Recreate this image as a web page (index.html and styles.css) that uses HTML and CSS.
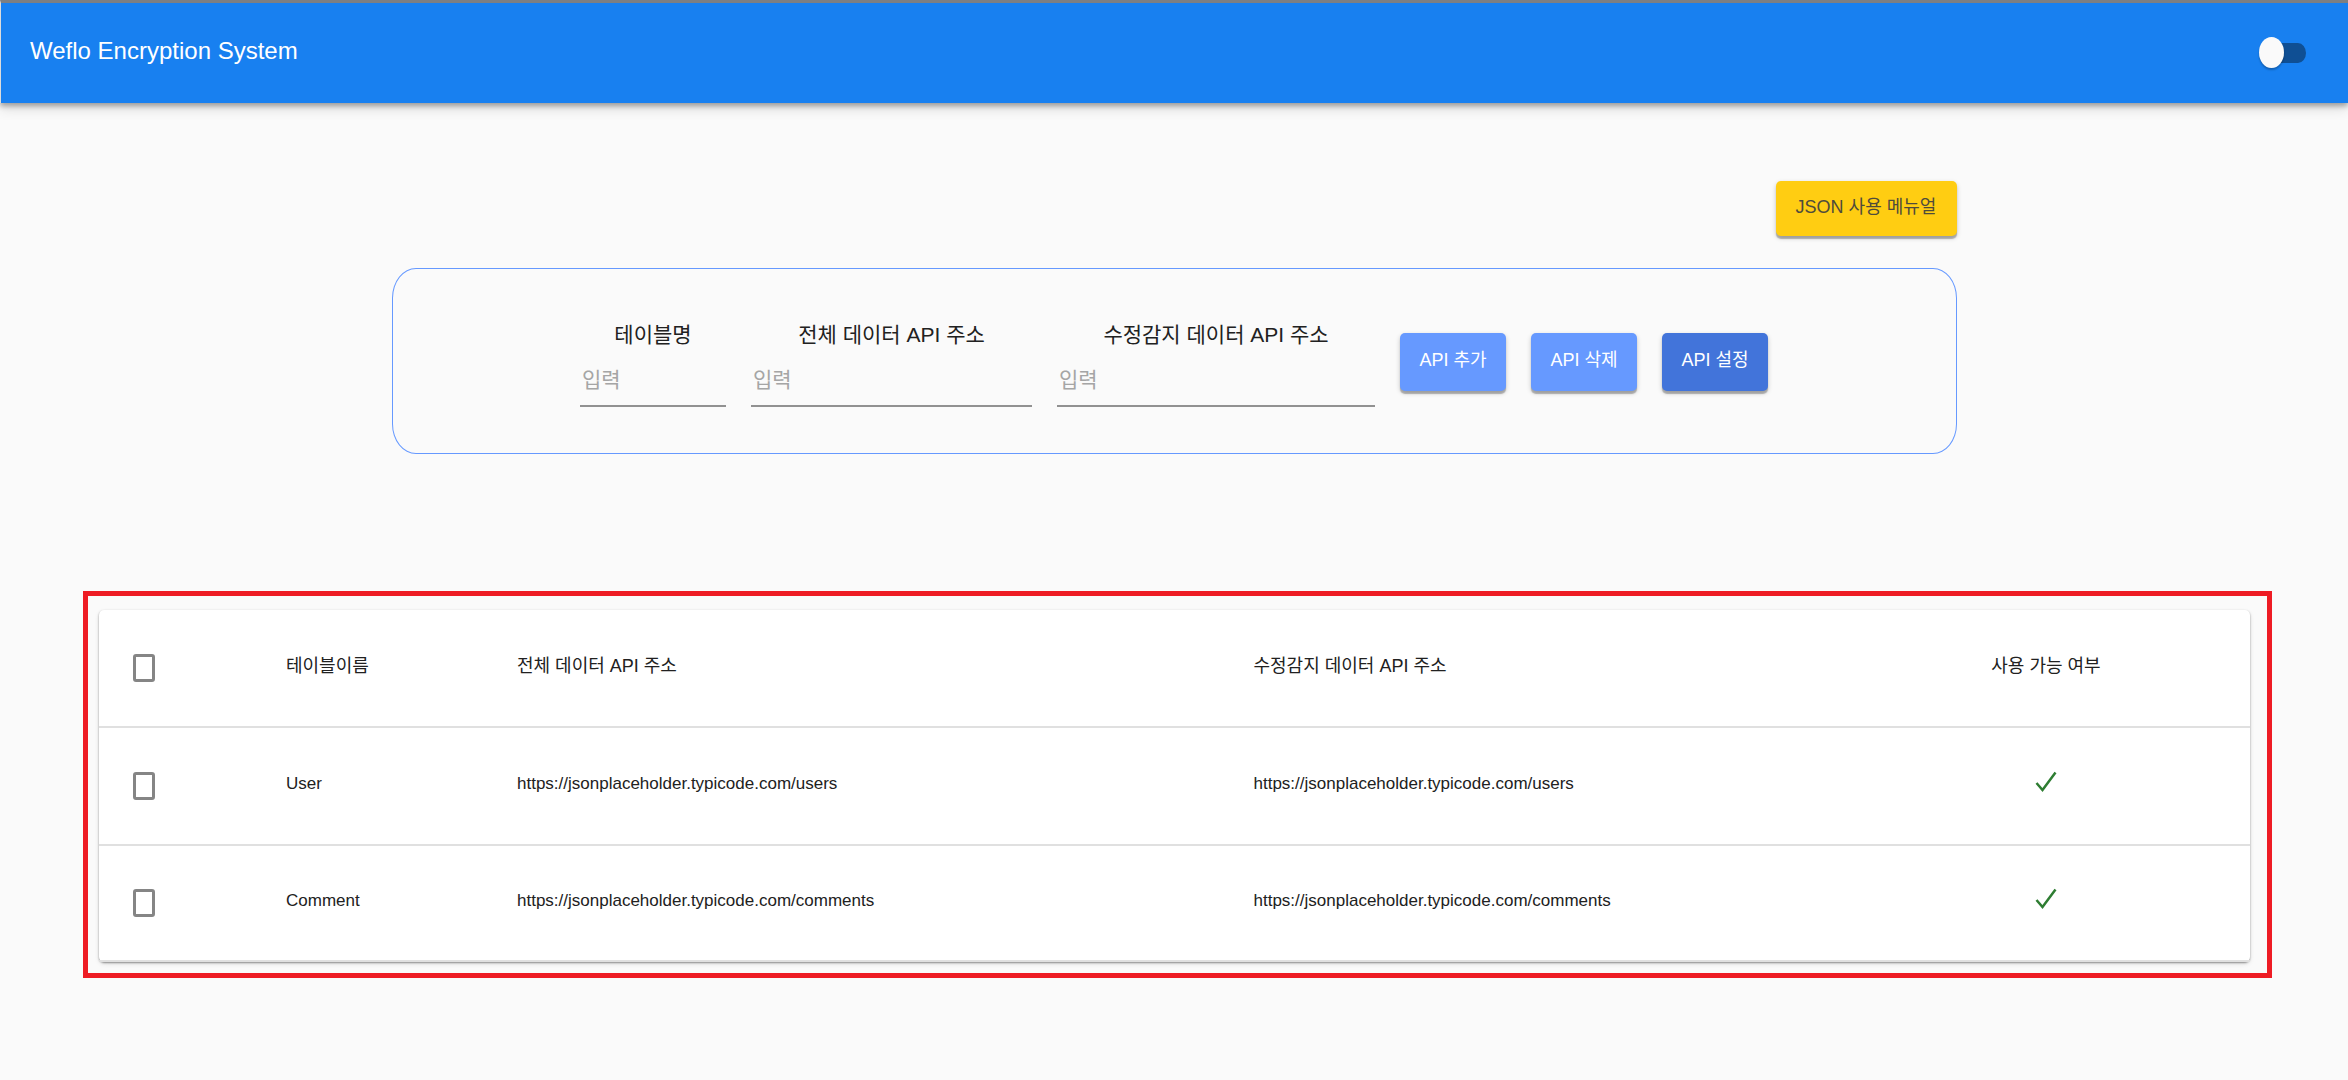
FILE: index.html
```html
<!DOCTYPE html>
<html lang="ko">
<head>
<meta charset="utf-8">
<meta name="viewport" content="width=device-width, initial-scale=1">
<title>Weflo Encryption System</title>
<link rel="stylesheet" href="styles.css">
</head>
<body>
<header class="app-bar">
  <h1 class="app-title">Weflo Encryption System</h1>
  <input class="switch" type="checkbox" role="switch" aria-label="API 설정">
</header>
<main class="page">
  <section class="tools">
    <button class="button button-manual" type="button">JSON 사용 메뉴얼</button>
    <form class="panel">
      <div class="field field-name">
        <label class="field-label" for="name">테이블명</label>
        <input class="field-input" id="name" type="text" placeholder="입력">
      </div>
      <div class="field field-all">
        <label class="field-label" for="all">전체 데이터 API 주소</label>
        <input class="field-input" id="all" type="text" placeholder="입력">
      </div>
      <div class="field field-changed">
        <label class="field-label" for="changed">수정감지 데이터 API 주소</label>
        <input class="field-input" id="changed" type="text" placeholder="입력">
      </div>
      <button class="button" type="button">API 추가</button>
      <button class="button" type="button">API 삭제</button>
      <button class="button button-dark" type="button">API 설정</button>
    </form>
  </section>
  <section class="frame">
    <table class="table">
      <colgroup><col class="col-check"><col class="col-name"><col class="col-url"><col class="col-url"><col></colgroup>
      <thead>
        <tr>
          <th><input class="check" type="checkbox" aria-label="테이블이름"></th>
          <th>테이블이름</th>
          <th>전체 데이터 API 주소</th>
          <th>수정감지 데이터 API 주소</th>
          <th class="status">사용 가능 여부</th>
        </tr>
      </thead>
      <tbody>
        <tr>
          <td><input class="check" type="checkbox" aria-label="User"></td>
          <td>User</td>
          <td>https://jsonplaceholder.typicode.com/users</td>
          <td>https://jsonplaceholder.typicode.com/users</td>
          <td class="status"><svg class="tick" viewBox="0 0 22 22"><path d="M1.500 12 7.500 19 20.500 1.500"/></svg></td>
        </tr>
        <tr>
          <td><input class="check" type="checkbox" aria-label="Comment"></td>
          <td>Comment</td>
          <td>https://jsonplaceholder.typicode.com/comments</td>
          <td>https://jsonplaceholder.typicode.com/comments</td>
          <td class="status"><svg class="tick" viewBox="0 0 22 22"><path d="M1.500 12 7.500 19 20.500 1.500"/></svg></td>
        </tr>
      </tbody>
    </table>
  </section>
</main>
</body>
</html>
```
FILE: styles.css
```css
* {
  box-sizing: border-box;
}

body {
  margin: 0;
  background: #fafafa;
  color: #212121;
  font-family: "Liberation Sans", "Noto Sans CJK KR", sans-serif;
  font-size: 18px;
  line-height: 24px;
}

.app-bar {
  display: flex;
  align-items: center;
  justify-content: space-between;
  height: 103px;
  padding: 0 42px 0 29px;
  border-top: 3px solid #7d7f82;
  border-left: 1px solid #dcdcdc;
  background: #1880f0;
  box-shadow: 0 3px 5px rgba(0, 0, 0, 0.3), 0 6px 12px rgba(0, 0, 0, 0.12);
}

.app-title {
  margin: 0;
  padding-bottom: 4px;
  color: #fff;
  font-size: 24px;
  font-weight: 400;
  line-height: 36px;
}

.switch {
  position: relative;
  width: 40px;
  height: 20px;
  margin: 0;
  border-radius: 8px / 10px;
  background: #0f4f94;
  appearance: none;
}

.switch::before {
  content: "";
  position: absolute;
  top: -6px;
  left: -7px;
  width: 25px;
  height: 31px;
  border-radius: 50%;
  background: #fafafa;
  box-shadow: 0 2px 2px rgba(0, 0, 0, 0.25);
}

.page {
  padding: 78px 0 102px;
}

.tools {
  display: flex;
  flex-direction: column;
  align-items: flex-end;
  gap: 32px;
  width: 1565px;
  max-width: 100%;
  margin: 0 auto 137px;
}

.button {
  width: 106px;
  height: 58px;
  padding: 0 0 4px;
  border: 0;
  border-radius: 5px;
  background: #6699ff;
  color: #fff;
  font: inherit;
  white-space: nowrap;
  box-shadow: 0 3px 1px rgba(0, 0, 0, 0.25), 0 2px 5px rgba(0, 0, 0, 0.2);
}

.button-dark {
  background: #4274da;
}

.button-manual {
  width: 181px;
  height: 55px;
  background: #ffcd12;
  color: #4f4b3c;
}

.panel {
  display: flex;
  flex-wrap: wrap;
  align-items: center;
  justify-content: center;
  gap: 25px;
  width: 100%;
  padding: 47px 20px 46px;
  border: 1px solid #6699ff;
  border-radius: 24px / 30px;
}

.field {
  display: flex;
  flex-direction: column;
  font-size: 21px;
}

.field-name {
  width: 146px;
}

.field-all {
  width: 281px;
}

.field-changed {
  width: 318px;
}

.field-label {
  line-height: 38px;
  text-align: center;
}

.field-input {
  width: 100%;
  height: 53px;
  padding: 0 2px;
  border: 0;
  border-bottom: 2px solid #919191;
  background: transparent;
  color: inherit;
  font: inherit;
}

.field-input::placeholder {
  color: #a5a5a5;
}

.frame {
  margin: 0 76px 0 83px;
  padding: 14px 17px 11px 11px;
  border: 5px solid #ee1c24;
}

.table {
  width: 100%;
  table-layout: fixed;
  border-spacing: 0;
  border-radius: 5px;
  background: #fff;
  box-shadow: 0 1px 2px rgba(0, 0, 0, 0.4), 0 2px 5px rgba(0, 0, 0, 0.1);
}

.col-check {
  width: 163px;
}

.col-name {
  width: 231px;
}

.col-url {
  width: 34.24%;
}

.table th,
.table td {
  height: 118px;
  padding: 0 24px 4px;
  border-bottom: 2px solid #e0e0e0;
  font-weight: 400;
  text-align: left;
}

.table td {
  font-size: 17px;
}

.table tbody tr:last-child td {
  height: 116px;
}

.table tr > :first-child {
  padding: 0 0 0 34px;
}

.table tr > .status {
  padding-right: 148px;
  text-align: center;
  white-space: nowrap;
}

.table td.status {
  padding-bottom: 8px;
}

.check {
  display: block;
  width: 22px;
  height: 28px;
  margin: 0;
  border: 3px solid #858585;
  border-radius: 3px;
  appearance: none;
}

.tick {
  display: block;
  width: 22px;
  height: 22px;
  margin: 0 auto;
  fill: none;
  stroke: #2e7d32;
  stroke-width: 2.5;
}
```
